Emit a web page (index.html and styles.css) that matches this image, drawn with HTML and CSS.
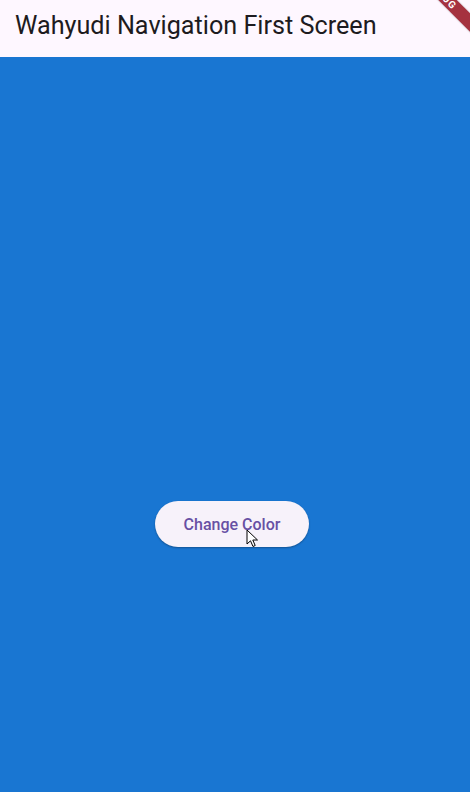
FILE: index.html
```html
<!DOCTYPE html>
<html>
<head>
<meta charset="utf-8">
<link rel="stylesheet" href="styles.css">
</head>
<body>
<div class="app">
  <header class="appbar">
    <h1 class="title">Wahyudi Navigation First Screen</h1>
  </header>
  <main class="content">
    <button class="btn">Change Color</button>
  </main>
  <div class="banner">DEBUG</div>
  <svg class="cursor" width="14" height="20" viewBox="0 0 14 20">
    <path d="M1 1 L1 15 L4.5 11.8 L7 17.5 L9.2 16.5 L6.8 11 L11.5 11 Z" fill="#fff" stroke="#000" stroke-width="1" stroke-linejoin="round"/>
  </svg>
</div>
</body>
</html>
```
FILE: styles.css
```css
html, body {
  margin: 0;
  padding: 0;
  width: 470px;
  height: 792px;
  overflow: hidden;
}
.app {
  position: relative;
  width: 470px;
  height: 792px;
  display: flex;
  flex-direction: column;
  overflow: hidden;
  font-family: Roboto, "Noto Sans", sans-serif;
}
.appbar {
  height: 57px;
  background: #fef7ff;
  display: flex;
  align-items: center;
  padding: 0 15px;
  flex: none;
}
.title {
  margin: 0;
  font-size: 25.2px;
  font-weight: 400;
  color: #1d1b20;
  padding-bottom: 6px;
}
.content {
  flex: 1;
  background: #1976d2;
  display: flex;
  align-items: center;
  justify-content: center;
  padding: 199px 6px 0 0;
}
.btn {
  width: 154px;
  height: 46px;
  border: none;
  border-radius: 23px;
  background: #f7f2fa;
  color: #6750a4;
  font-family: Roboto, "Noto Sans", sans-serif;
  font-size: 16px;
  font-weight: 500;
  box-shadow: 0 1px 2px rgba(0,0,0,0.3);
  padding: 0;
}
.banner {
  position: absolute;
  left: 382px;
  top: -12px;
  width: 120px;
  height: 13px;
  line-height: 13px;
  transform: rotate(45deg);
  background: #a5323f;
  color: #fff;
  font-size: 10px;
  font-weight: 700;
  text-align: center;
  letter-spacing: 1px;
  box-shadow: 0 0 2px rgba(0,0,0,0.3);
}
.cursor {
  position: absolute;
  left: 246px;
  top: 529px;
}
```
